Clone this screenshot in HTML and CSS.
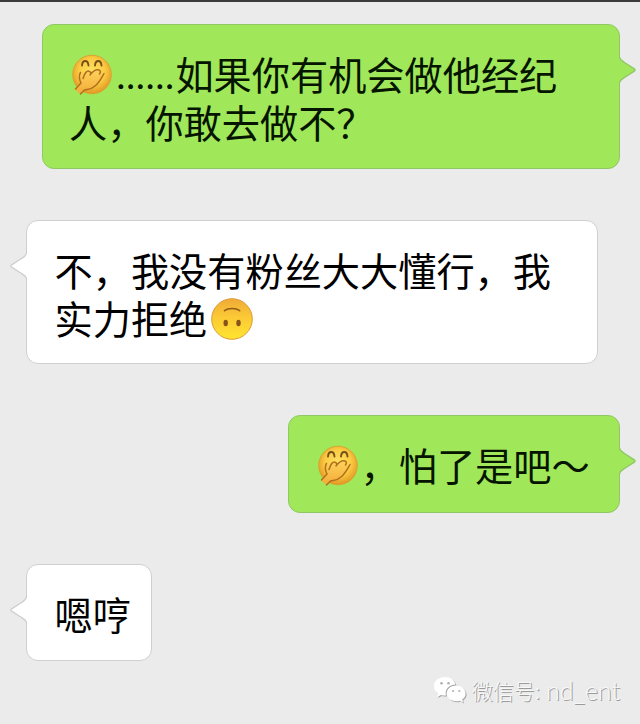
FILE: index.html
```html
<!DOCTYPE html>
<html lang="zh-CN">
<head>
<meta charset="utf-8">
<title>聊天</title>
<link rel="stylesheet" href="styles.css">
</head>
<body>
<svg class="defs" aria-hidden="true">
  <defs>
    <radialGradient id="face" cx="50%" cy="42%" r="56%">
      <stop offset="0" stop-color="#ffe261"/>
      <stop offset=".6" stop-color="#fbcb43"/>
      <stop offset="1" stop-color="#e39b25"/>
    </radialGradient>
    <linearGradient id="flip" x1="0" y1="0" x2="0" y2="1">
      <stop offset="0" stop-color="#efaa37"/>
      <stop offset=".45" stop-color="#fbc936"/>
      <stop offset="1" stop-color="#ffe52f"/>
    </linearGradient>
    <linearGradient id="hand" x1="0" y1="0" x2="0" y2="1">
      <stop offset="0" stop-color="#ffd35a"/>
      <stop offset="1" stop-color="#f2aa38"/>
    </linearGradient>
    <symbol id="giggle" viewBox="0 0 42 42">
      <circle cx="21" cy="20.5" r="19.3" fill="url(#face)" stroke="#dc9a2c" stroke-width=".8"/>
      <path d="M11 11.5C11.5 5.5 17 5.5 17.5 11.5M24 11.5C24.5 5.5 30 5.5 30.5 11.5" fill="none" stroke="#76501a" stroke-width="1.9" stroke-linecap="round"/>
      <path d="M4 35.5L10 29C8 25 8 21 10 18.5C11.5 17 13 19 12 24C13.5 19 16 16 18.5 17.5C20 18 20 19.5 19 21C22 17 25 15 28 16C30 17 29.5 18.5 28.5 20C31 19 33 20 31 23L24 32C20 36 16 35 13.5 36L9.5 40Z" fill="url(#hand)"/>
      <path d="M4.5 35L10 29C8 25 8 21 9.5 18.5M12 24.5C13.5 19 16 16 18.5 17.5C20 18 20 19.5 19 21C22 17 25 15 28 16C30 17 29.5 18.5 28.5 20M33 19.5C30 25 28 29 24 32C20 36 16 35 13.5 36L9.5 40" fill="none" stroke="#b0701f" stroke-width="1.5" stroke-linecap="round" stroke-linejoin="round"/>
    </symbol>
    <symbol id="upside" viewBox="0 0 42 42">
      <circle cx="21" cy="21" r="20.3" fill="url(#flip)" stroke="#dc9b35" stroke-width="1"/>
      <path d="M13.5 12.7C17 9.8 25 9.8 28.7 12.7" fill="none" stroke="#925b18" stroke-width="1.5" stroke-linecap="round"/>
      <ellipse cx="14.7" cy="25" rx="2.2" ry="3.2" fill="#86531a"/>
      <ellipse cx="27.5" cy="25" rx="2.2" ry="3.2" fill="#86531a"/>
    </symbol>
    <symbol id="tail" viewBox="0 0 20 30">
      <path d="M0 2H2.5C3 5.5 6 6.5 9 8.5L17 13.6Q19.3 15 17 16.4L9 21.5C6 23.5 3 24.5 2.5 28H0Z"/>
      <path class="edge" d="M2.5 2C3 5.5 6 6.5 9 8.5L17 13.6Q19.3 15 17 16.4L9 21.5C6 23.5 3 24.5 2.5 28"/>
    </symbol>
  </defs>
</svg>
<main class="chat">
  <div class="bubble sent wide">
    <svg class="tail"><use href="#tail"/></svg>
    <p><svg class="emoji giggle"><use href="#giggle"/></svg><span class="dots">……</span>如果你有机会做他经纪<br>人，你敢去做不？</p>
  </div>
  <div class="bubble received long">
    <svg class="tail"><use href="#tail"/></svg>
    <p>不，我没有粉丝大大懂行，我<br>实力拒绝<svg class="emoji upside"><use href="#upside"/></svg></p>
  </div>
  <div class="bubble sent short">
    <svg class="tail"><use href="#tail"/></svg>
    <p><svg class="emoji giggle"><use href="#giggle"/></svg>，怕了是吧～</p>
  </div>
  <div class="bubble received tiny">
    <svg class="tail"><use href="#tail"/></svg>
    <p>嗯哼</p>
  </div>
</main>
<footer class="watermark">
  <svg class="wechat" viewBox="0 0 34 28">
    <path d="M12 1C5.5 1 1 5 1 10.3C1 13.3 2.6 15.8 5 17.5L4 21L8 19C9.3 19.4 10.5 19.6 12 19.6L13 19.5C11.5 13.5 16 8.8 22.5 8.5C21.5 4 17.5 1 12 1Z"/>
    <path d="M23 9.8C17.5 9.8 13.8 13.3 13.8 17.6C13.8 22 17.8 25.3 23 25.3C24.3 25.3 25.5 25 26.6 24.7L30 26.6L29.2 23.6C31.3 22.2 32.6 20 32.6 17.6C32.6 13.3 28.5 9.8 23 9.8Z"/>
    <g class="eyes"><circle cx="8.5" cy="7.3" r="1.3"/><circle cx="15.5" cy="7.3" r="1.3"/><circle cx="20" cy="15" r="1.1"/><circle cx="26.3" cy="15" r="1.1"/></g>
  </svg>
  <span class="label">微信号:</span><span class="account">nd_ent</span>
</footer>
</body>
</html>
```
FILE: styles.css
```css
* { box-sizing: border-box; }
body {
  margin: 0;
  height: 724px;
  overflow: hidden;
  display: flex;
  flex-direction: column;
  background: #ebebeb;
  border-top: 2px solid #3c3a3c;
  font-family: "Noto Sans CJK SC", sans-serif;
  color: #000;
}
.defs { position: absolute; width: 0; height: 0; }
.chat {
  display: flex;
  flex-direction: column;
  align-items: flex-start;
  gap: 51px;
  padding: 22px 20px 0 26px;
}
.bubble {
  position: relative;
  border: 1.5px solid var(--line);
  border-radius: 12px;
  background: var(--fill);
  padding: 25px 0 0 27.5px;
}
.sent { --fill: #a0e75a; --line: #8fc865; align-self: flex-end; color: #051500; }
.received { --fill: #fff; --line: #cfcfcf; }
.bubble p {
  margin: 0;
  font-size: 38.2px;
  line-height: 48px;
  white-space: nowrap;
}
.wide { width: 578px; height: 145px; padding-left: 26px; }
.long { width: 572px; height: 144px; }
.short { width: 332px; height: 98px; }
.tiny { width: 126px; height: 97px; }
.tail {
  position: absolute;
  top: 30px;
  right: -18px;
  width: 20px;
  height: 30px;
  fill: var(--fill);
  stroke: none;
}
.received .tail { right: auto; left: -18px; transform: scaleX(-1); }
.edge { fill: none; stroke: var(--line); stroke-width: 1.3; }
.emoji { display: inline-block; vertical-align: -6px; }
.giggle { width: 42px; height: 42px; margin: 0 3px 0 2px; }
.short .giggle { margin: 0 2px 0 0; }
.upside { width: 42px; height: 42px; margin-left: 4px; vertical-align: -6px; }
.dots {
  margin-right: 1px;
  font-size: 29.2px;
  font-weight: 700;
  line-height: 0;
  vertical-align: -8px;
}
.watermark {
  display: flex;
  align-items: center;
  align-self: flex-end;
  height: 30px;
  margin: 14px 20px 0 0;
  color: #f8f8f8;
  font-size: 21px;
  line-height: 30px;
  text-shadow: 1px 1px 0 #9b9b9b;
}
.wechat { width: 34px; height: 28px; margin-right: 5px; fill: #fff; filter: drop-shadow(1px 1px 0 #a8a8a8); }
.eyes { fill: #b0b0b0; }
.label { font-weight: 300; }
.account { font: 300 25px/30px Lato, sans-serif; margin-left: 6px; }
```
